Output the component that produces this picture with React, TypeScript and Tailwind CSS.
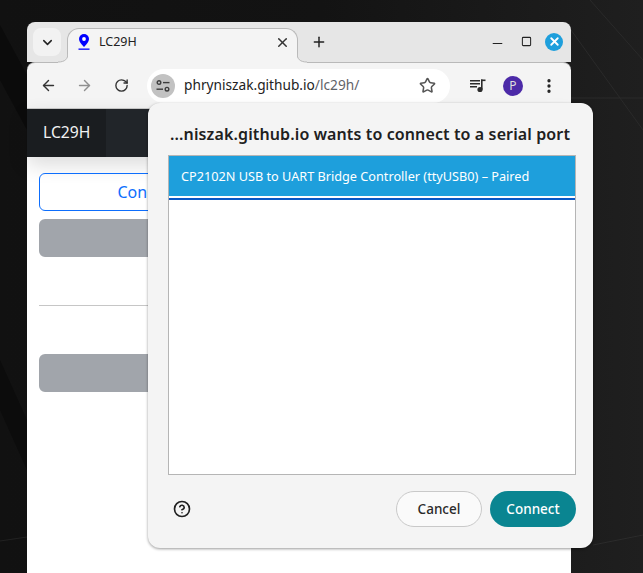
import React from "react";
import { ArrowLeft, ArrowRight, RotateCw, Star, X, Plus, ChevronDown, Minus, Square, MoreVertical, CircleHelp } from "lucide-react";

const SiteControls = () => (
  <svg width="14" height="12" viewBox="0 0 14 12" fill="none" stroke="#3c3c3c" strokeWidth="1.4">
    <circle cx="3" cy="2.6" r="1.8" />
    <path d="M7 2.6h6.5" />
    <path d="M.5 9.2h6.5" />
    <circle cx="11" cy="9.2" r="1.8" />
  </svg>
);

const PinFavicon = () => (
  <svg width="12" height="16" viewBox="0 0 12 16">
    <path d="M6 0a5 5 0 0 0-5 5c0 3.4 5 8 5 8s5-4.600 5-8a5 5 0 0 0-5-5z" fill="#0000ff" />
    <circle cx="6" cy="5" r="1.900" fill="#fff" />
    <rect x="0.500" y="14.500" width="11" height="1.300" fill="#0000ff" />
  </svg>
);

const QueueMusic = () => (
  <svg width="16" height="14" viewBox="0 0 16 14" fill="#2b2b2b">
    <rect x="0" y="1" width="10" height="1.500" />
    <rect x="0" y="4" width="10" height="1.500" />
    <rect x="0" y="7" width="7" height="1.500" />
    <rect x="11" y="0.500" width="1.600" height="10" />
    <rect x="11" y="0.500" width="4.500" height="1.600" />
    <circle cx="10" cy="10.500" r="2.600" />
  </svg>
);

// little curved feet where the active tab runs into the toolbar
const TabFoot = ({ flip }: { flip?: boolean }) => (
  <svg width="10" height="10" viewBox="0 0 10 10" className={flip ? "absolute bottom-0 left-[-10px] -scale-x-100" : "absolute bottom-0 right-[-10px]"}>
    <path d="M0 0c0 6 3 9 10 9v1H0z" fill="#f4f4f4" />
    <path d="M0 0c0 6 3 9 10 9" fill="none" stroke="#b9b9b9" />
  </svg>
);

const DesktopLines = () => (
  <svg width="643" height="573" viewBox="0 0 643 573" className="absolute inset-0">
    <path d="M0 25L27 75V130L0 80z" fill="#0b0b0b" />
    <path d="M0 360L27 420V470L0 410z" fill="#0c0c0c" />
    <path d="M571 30L643 130M571 98H643M590 0L643 60" stroke="#2a2a2a" fill="none" />
    <path d="M593 545L643 535" stroke="#2b2b2b" fill="none" />
    <path d="M0 541L27 537" stroke="#222" fill="none" />
  </svg>
);

const Toolbar = () => (
  <div className="flex h-[46px] items-center rounded-t-lg border-t border-[#b9b9b9] bg-[#f4f4f4]">
    <ArrowLeft size={17} className="ml-[13px] text-[#333]" strokeWidth={2} />
    <ArrowRight size={17} className="ml-[19px] text-[#8f8f8f]" strokeWidth={2} />
    <RotateCw size={15} className="ml-[21px] text-[#333]" strokeWidth={2.200} />
    <div className="ml-[18px] flex h-[34px] w-[303px] items-center rounded-full bg-white pl-1">
      <div className="flex h-6 w-6 items-center justify-center rounded-full bg-[#c2c2c2]">
        <SiteControls />
      </div>
      <span className="ml-[9px] text-[13.700px] text-[#222]">
        phryniszak.github.io<span className="text-[#5f6368]">/lc29h/</span>
      </span>
      <Star size={17} className="ml-auto mr-[14px] text-[#555]" strokeWidth={2.200} />
    </div>
    <div className="ml-[20px]">
      <QueueMusic />
    </div>
    <div className="ml-[17px] flex h-5 w-5 items-center justify-center rounded-full bg-[#4c2aa8] text-[12px] text-[#ddd]">P</div>
    <MoreVertical size={18} className="ml-[17px] text-[#222]" strokeWidth={2.400} />
  </div>
);

const TitleBar = () => (
  <div className="flex h-[40px] items-end rounded-t-lg bg-[#e6e6e6]">
    <div className="mb-[6px] ml-[6px] flex h-7 w-7 items-center justify-center rounded-lg bg-[#f2f2f2]">
      <ChevronDown size={15} className="text-[#222]" strokeWidth={2.400} />
    </div>
    <div className="relative z-10 -mb-px ml-[6px] flex h-[35px] w-[231px] items-start rounded-t-xl border border-b-0 border-[#b9b9b9] bg-[#f4f4f4] pl-[10px] pr-[7px] pt-[5px]">
      <TabFoot flip />
      <TabFoot />
      <PinFavicon />
      <span className="ml-[9px] text-[12.500px] leading-[16px] text-[#222]">LC29H</span>
      <X size={15} className="ml-auto mt-[1px] text-[#333]" strokeWidth={2.400} />
    </div>
    <Plus size={16} className="mb-[12px] ml-[13px] text-[#222]" strokeWidth={2.200} />
    <div className="mb-[11px] ml-auto flex items-center">
      <Minus size={15} className="mt-[4px] text-[#222]" strokeWidth={1.600} />
      <Square size={11} className="ml-[16px] text-[#222]" strokeWidth={2.200} />
      <div className="ml-[13px] mr-[8px] flex h-[18px] w-[18px] items-center justify-center rounded-full bg-[#1e9fdc]">
        <X size={13} className="text-white" strokeWidth={3.400} />
      </div>
    </div>
  </div>
);

const PageContent = () => (
  <div className="h-full bg-white">
    <div className="flex h-[49px] items-stretch border-t border-[#c4c4c4] bg-[#212529] shadow-[0_8px_20px_rgba(0,0,0,0.14)]">
      <div className="flex w-[79px] items-center bg-[#1a1d20] pl-4 text-[15.700px] text-[#f2f2f2]">LC29H</div>
    </div>
    <div className="flex w-[231px] flex-col pl-3 pt-4">
      <button className="h-[38px] w-full rounded-md border border-[#0d6efd] text-[16px] text-[#0d6efd]">Connect</button>
      <div className="mt-2 h-[38px] w-full rounded-md bg-[#a1a5ab]" />
      <div className="mt-12 h-px w-[500px] bg-[#c6c6c6]" />
      <div className="mt-12 h-[38px] w-full rounded-md bg-[#a1a5ab]" />
    </div>
  </div>
);

const SerialDialog = () => (
  <div className="absolute left-[148px] top-[103px] flex h-[445px] w-[445px] flex-col rounded-xl bg-[#f4f4f4] pb-[21px] pl-5 pr-[17px] shadow-[0_1px_3px_rgba(0,0,0,0.4)]">
    <h1 className="flex h-[52px] items-center pl-[2px] pt-[10px] text-[16px] font-semibold tracking-[0.12px] whitespace-nowrap text-[#202020]">
      ...niszak.github.io wants to connect to a serial port
    </h1>
    <div className="h-[320px] border border-[#b5b5b5] bg-white">
      <div className="flex h-10 items-center bg-[#1e9fdc] pl-3 pt-[2px] text-[12.700px] text-white">
        CP2102N USB to UART Bridge Controller (ttyUSB0) – Paired
      </div>
      <div className="mt-[2px] h-[2px] bg-[#0b57c4]" />
    </div>
    <div className="mt-auto flex items-center">
      <CircleHelp size={18} className="ml-[5px] text-[#202020]" strokeWidth={2.200} />
      <button className="ml-auto h-9 w-[86px] rounded-full border border-[#c9c9c9] bg-[#fafafa] text-[13.500px] font-medium text-[#2a2a2a]">Cancel</button>
      <button className="ml-2 h-9 w-[86px] rounded-full bg-[#0a8591] text-[13.500px] font-medium text-white">Connect</button>
    </div>
  </div>
);

export default function App() {
  return (
    <div className="relative h-[573px] w-[643px] overflow-hidden bg-[linear-gradient(90deg,#111_0%,#131313_50%,#1f1f1f_100%)] font-['Noto_Sans',sans-serif]">
      <DesktopLines />
      <div className="absolute left-[27px] top-[22px] flex h-[551px] w-[544px] flex-col rounded-t-lg">
        <TitleBar />
        <Toolbar />
        <div className="flex-1">
          <PageContent />
        </div>
      </div>
      <SerialDialog />
    </div>
  );
}
